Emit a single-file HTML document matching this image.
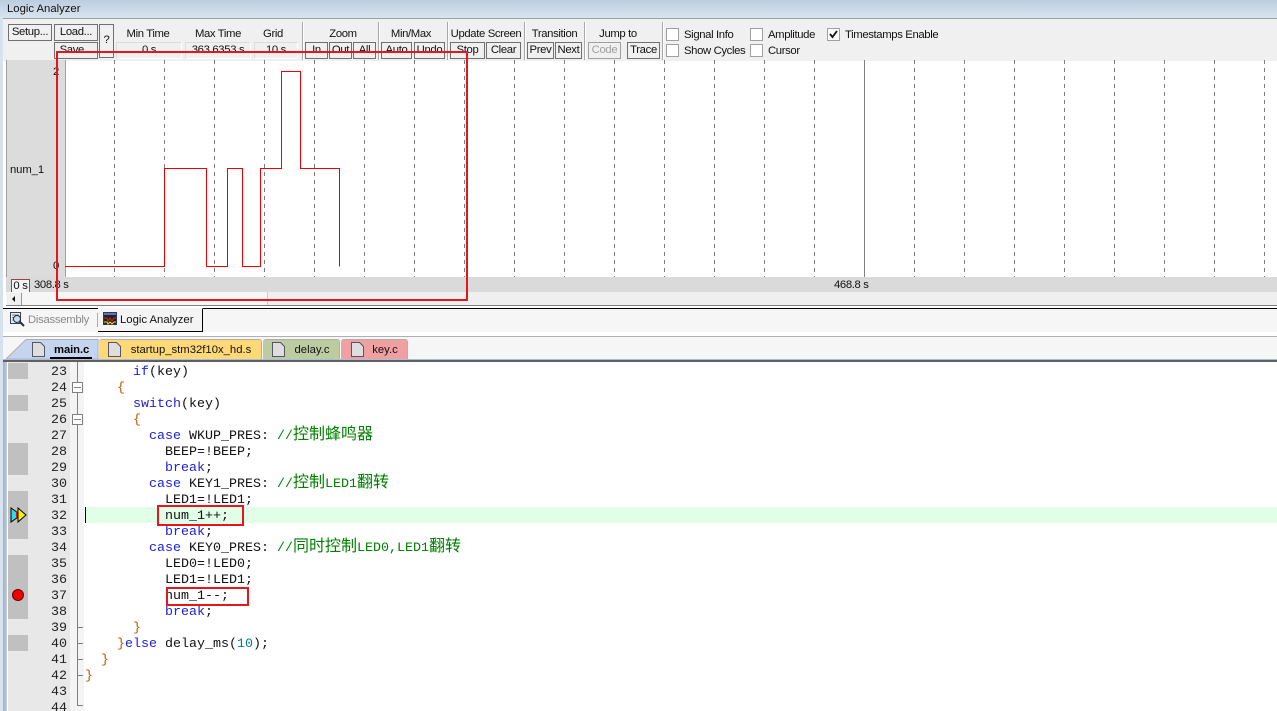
<!DOCTYPE html>
<html><head><meta charset="utf-8"><style>
html,body{margin:0;padding:0;background:#fff}
#p{position:relative;width:1277px;height:711px;overflow:hidden;background:#fff;font-family:"Liberation Sans","Noto Sans CJK SC",sans-serif;font-size:11.3px;color:#111}
#p div{position:absolute}
.t{white-space:pre;line-height:14px;letter-spacing:-.36px}
.c{text-align:center}
.b{box-sizing:border-box;border:1px solid #707070;background:#f0f0f0;text-align:center;line-height:15px;height:17px;white-space:pre;letter-spacing:-.33px}
.f{box-sizing:border-box;border:1px solid #dcdcdc;border-bottom:1px solid #fff;border-right:1px solid #fff;background:#f0f0f0;height:17px;top:42px;text-align:center;line-height:15px;letter-spacing:-.33px}
.s{width:1px;top:22px;height:38px;background:#a8a8a8;border-right:1px solid #fff}
.k{box-sizing:border-box;width:13px;height:13px;border:1px solid #a0a0a0;background:#fff}
.l{font-family:"Liberation Mono","Noto Sans CJK SC",monospace;font-size:13.33px;line-height:16px;white-space:pre;color:#111;left:85px}
.l b{font-weight:400;color:#2020e0}.l i{font-style:normal;color:#008000}.l u{text-decoration:none;color:#b85a00}.l s{text-decoration:none;color:#008080}
.l em{font-style:normal;font-size:16px;line-height:0;font-family:"Noto Sans CJK SC",sans-serif}
.n{font-family:"Liberation Mono",monospace;font-size:13.33px;line-height:16px;left:40px;width:27px;text-align:right;color:#222}
.g{left:8px;width:20px;background:#c0c0c0}
.r{border:2px solid #e8141e;box-sizing:border-box}
.tab{top:339px;height:20px;box-sizing:border-box;border-top:1px solid #b0b0b0;border-right:1px solid #b0b0b0;text-align:center;line-height:20px;border-radius:3px 3px 0 0}
</style></head><body><div id="p">
<div style="left:0;top:0;width:1277px;height:18px;background:linear-gradient(#bccde0,#d8e4f0)"></div>
<div class="t" style="left:7px;top:2px;letter-spacing:0">Logic Analyzer</div>
<div style="left:0;top:18px;width:3px;height:693px;background:#d6e2ee"></div>
<div style="left:3px;top:18px;width:1274px;height:42px;background:#f0f0f0;border-top:1px solid #a0a0a0"></div>

<div class="b" style="left:8px;top:24px;width:44px">Setup...</div>
<div class="b" style="left:54px;top:24px;width:44px">Load...</div>
<div class="b" style="left:54px;top:42px;width:44px">Save...</div>
<div class="b" style="left:99px;top:24px;width:15px;height:34px;line-height:30px">?</div>
<div class="t c" style="left:116px;top:27px;width:64px">Min Time</div>
<div class="t c" style="left:185px;top:27px;width:66px">Max Time</div>
<div class="t c" style="left:251px;top:27px;width:44px">Grid</div>
<div class="f" style="left:116px;width:66px">0 s</div>
<div class="f" style="left:185px;width:66px">363.6353 s</div>
<div class="f" style="left:254px;width:44px">10 s</div>
<div class="s" style="left:302px"></div>
<div class="t c" style="left:307px;top:27px;width:72px">Zoom</div>
<div class="b" style="left:305px;top:42px;width:23px">In</div>
<div class="b" style="left:329px;top:42px;width:23px">Out</div>
<div class="b" style="left:353px;top:42px;width:23px">All</div>
<div class="s" style="left:378px"></div>
<div class="t c" style="left:380px;top:27px;width:62px">Min/Max</div>
<div class="b" style="left:381px;top:42px;width:31px">Auto</div>
<div class="b" style="left:414px;top:42px;width:31px">Undo</div>
<div class="s" style="left:447px"></div>
<div class="t c" style="left:450px;top:27px;width:72px">Update Screen</div>
<div class="b" style="left:450px;top:42px;width:35px">Stop</div>
<div class="b" style="left:486px;top:42px;width:35px">Clear</div>
<div class="s" style="left:524px"></div>
<div class="t c" style="left:527px;top:27px;width:55px">Transition</div>
<div class="b" style="left:527px;top:42px;width:27px">Prev</div>
<div class="b" style="left:555px;top:42px;width:27px">Next</div>
<div class="s" style="left:584px"></div>
<div class="t c" style="left:588px;top:27px;width:60px">Jump to</div>
<div class="b" style="left:588px;top:42px;width:33px;color:#a0a0a0;border-color:#a0a0a0">Code</div>
<div class="b" style="left:627px;top:42px;width:33px">Trace</div>
<div class="s" style="left:662px"></div>
<div class="k" style="left:666px;top:28px"></div><div class="t" style="left:684px;top:28px">Signal Info</div>
<div class="k" style="left:666px;top:44px"></div><div class="t" style="left:684px;top:44px">Show Cycles</div>
<div class="k" style="left:750px;top:28px"></div><div class="t" style="left:768px;top:28px">Amplitude</div>
<div class="k" style="left:750px;top:44px"></div><div class="t" style="left:768px;top:44px">Cursor</div>
<div class="k" style="left:827px;top:28px"></div><div class="t" style="left:845px;top:28px">Timestamps Enable</div>
<svg style="position:absolute;left:827px;top:28px" width="13" height="13"><path d="M3 6l2.500 3L10 3" fill="none" stroke="#111" stroke-width="1.800"/></svg>

<div style="left:6px;top:60px;width:58px;height:217px;background:#dcdcdc;border-left:1px solid #a0a0a0;border-right:1px solid #a0a0a0"></div>
<div class="t" style="left:10px;top:163px;letter-spacing:-.1px">num_1</div>
<div class="t" style="left:53px;top:65px">2</div>
<div class="t" style="left:53px;top:259px">0</div>
<svg style="position:absolute;left:0;top:0" width="1277" height="300">
<path d="M114.500 60V277M164.500 60V277M214.500 60V277M264.500 60V277M314.500 60V277M364.500 60V277M414.500 60V277M464.500 60V277M514.500 60V277M564.500 60V277M614.500 60V277M664.500 60V277M714.500 60V277M764.500 60V277M814.500 60V277M914.500 60V277M964.500 60V277M1014.500 60V277M1064.500 60V277M1114.500 60V277M1164.500 60V277M1214.500 60V277M1264.500 60V277" stroke="#808080" stroke-dasharray="4 4" fill="none"/>
<path d="M864.500 60V277" stroke="#808080" fill="none"/>
<path d="M65 266.500H164.500V168.500H206.500V266.500H227.500V168.500H242.500V266.500H260.500V168.500H281.500V71.500H300.500V168.500H339.500V266.500" stroke="#f00000" fill="none"/>
</svg>
<div style="left:6px;top:277px;width:1271px;height:15px;background:#dadada"></div>
<div style="left:11px;top:279px;width:19px;height:14px;box-sizing:border-box;border:1px solid #a04040;border-bottom:0;background:#f4f4f4;line-height:13px;text-align:center;letter-spacing:-.3px">0 s</div>
<div class="t" style="left:34px;top:278px">308.8 s</div>
<div class="t" style="left:834px;top:278px">468.8 s</div>
<div style="left:6px;top:292px;width:261px;height:14px;background:#f6f6f6"></div>
<div style="left:267px;top:292px;width:1010px;height:13px;background:#efefef;border-left:1px solid #ccc"></div>
<div style="left:7px;top:293px;width:15px;height:13px;background:#f0f0f0;box-sizing:border-box;border-right:1px solid #999;border-bottom:1px solid #999"></div>
<svg style="position:absolute;left:10px;top:295px" width="8" height="8"><path d="M5 1L2 4L5 7Z" fill="#111"/></svg>
<div style="left:6px;top:305px;width:1271px;height:1px;background:#808080"></div>
<div style="left:3px;top:306px;width:1274px;height:1px;background:#fff"></div>
<div style="left:3px;top:308px;width:1274px;height:1px;background:#000"></div>
<div style="left:3px;top:309px;width:1274px;height:23px;background:#f6f6f6"></div>
<div style="left:98px;top:308px;width:105px;height:24px;box-sizing:border-box;background:#f4f4f4;border-right:1px solid #000;border-bottom:1px solid #000;border-top:1px solid #f4f4f4"></div>
<svg style="position:absolute;left:9px;top:311px" width="17" height="17"><rect x="1.500" y="1.500" width="10" height="11" fill="#eee" stroke="#345"/><path d="M3 4h7M3 6.500h7M3 9h7" stroke="#678"/><circle cx="8" cy="8" r="3.500" fill="#cde" stroke="#234"/><path d="M10.500 10.500L15 15" stroke="#234" stroke-width="2"/></svg>
<div class="t" style="left:28px;top:313px;color:#8a8a8a;letter-spacing:-.28px">Disassembly</div>
<div style="left:97px;top:313px;width:1px;height:14px;background:#b0b0b0"></div>
<svg style="position:absolute;left:103px;top:312px" width="14" height="14"><rect x=".5" y=".5" width="13" height="12" fill="#222" stroke="#336"/><rect x="1" y="1" width="12" height="2" fill="#5577bb"/><path d="M1 6h3l1 3 2-3 2 3 2-3h2" stroke="#e02020" fill="none"/><path d="M1 10h3l1 2 2-2 2 2 2-2h2" stroke="#f0e000" fill="none"/></svg>
<div class="t" style="left:120px;top:313px;letter-spacing:0">Logic Analyzer</div>

<div style="left:3px;top:336px;width:1274px;height:1px;background:#b0b0b0"></div>
<div style="left:3px;top:337px;width:1274px;height:22px;background:#f6f6f6"></div>
<svg style="position:absolute;left:6px;top:338px" width="94" height="22"><path d="M0 21L20 1.500H92V21Z" fill="#c5d5f0" stroke="#b0b0b0"/></svg>
<div class="t" style="left:54px;top:343px;font-weight:700;letter-spacing:-.1px;color:#000">main.c</div>
<div style="left:50px;top:357px;width:42px;height:2px;background:#000"></div>
<div class="tab" style="left:99px;width:163px;background:#ffd878;padding-left:22px">startup_stm32f10x_hd.s</div>
<div class="tab" style="left:263px;width:77px;background:#bccca0;padding-left:22px">delay.c</div>
<div class="tab" style="left:341px;width:67px;background:#f0a0a0;padding-left:22px">key.c</div>
<svg style="position:absolute;left:0;top:341px" width="420" height="18"><g fill="#dedede" stroke="#556"><path d="M32.500 1.500H40.500L44.500 5.500V15.500H32.500Z"/><path d="M108.500 1.500H116.500L120.500 5.500V15.500H108.500Z"/><path d="M272.500 1.500H280.500L284.500 5.500V15.500H272.500Z"/><path d="M351.500 1.500H359.500L363.500 5.500V15.500H351.500Z"/></g></svg>
<div style="left:3px;top:359px;width:1274px;height:1px;background:#a8bcdc"></div>
<div style="left:3px;top:360px;width:1274px;height:2px;background:#606060"></div>
<div style="left:3px;top:362px;width:4px;height:349px;background:linear-gradient(90deg,#9cb0cc,#c4ccd8)"></div>

<div style="left:8px;top:362px;width:62px;height:349px;background:#e8e8e8"></div>
<div style="left:70px;top:362px;width:14px;height:349px;background:#f4f4f4"></div>
<div class="g" style="top:363px;height:16px"></div>
<div class="g" style="top:395px;height:16px"></div>
<div class="g" style="top:443px;height:32px"></div>
<div class="g" style="top:491px;height:48px"></div>
<div class="g" style="top:555px;height:64px"></div>
<div class="g" style="top:635px;height:16px"></div>
<div style="left:77px;top:362px;width:1px;height:343px;background:#808080"></div>
<div style="left:77px;top:705px;width:6px;height:1px;background:#808080"></div>
<div style="left:77px;top:627px;width:6px;height:1px;background:#808080"></div>
<div style="left:77px;top:643px;width:6px;height:1px;background:#808080"></div>
<div style="left:77px;top:659px;width:6px;height:1px;background:#808080"></div>
<div style="left:77px;top:675px;width:6px;height:1px;background:#808080"></div>
<div style="left:72px;top:382px;width:11px;height:11px;box-sizing:border-box;border:1px solid #808080;background:#fff"></div>
<div style="left:74px;top:387px;width:7px;height:1px;background:#808080"></div>
<div style="left:72px;top:414px;width:11px;height:11px;box-sizing:border-box;border:1px solid #808080;background:#fff"></div>
<div style="left:74px;top:419px;width:7px;height:1px;background:#808080"></div>

<div style="left:85px;top:507px;width:1192px;height:16px;background:#e0ffe6"></div>
<div style="left:85px;top:507px;width:1px;height:16px;background:#000"></div>
<svg style="position:absolute;left:10px;top:507px" width="18" height="16"><path d="M1 1L11 8L1 15Z" fill="#20e0f0" stroke="#000"/><path d="M6 4.500L11 8L6 11.500Z" fill="#e01010"/><path d="M8 1L16 8L8 15Z" fill="#f8f000" stroke="#000"/></svg>
<svg style="position:absolute;left:11px;top:588px" width="14" height="14"><circle cx="7" cy="7" r="5.500" fill="#f00000" stroke="#600" /></svg>

<div class="n" style="top:365px">23</div><div class="n" style="top:381px">24</div><div class="n" style="top:397px">25</div><div class="n" style="top:413px">26</div><div class="n" style="top:429px">27</div><div class="n" style="top:445px">28</div><div class="n" style="top:461px">29</div><div class="n" style="top:477px">30</div><div class="n" style="top:493px">31</div><div class="n" style="top:509px">32</div><div class="n" style="top:525px">33</div><div class="n" style="top:541px">34</div><div class="n" style="top:557px">35</div><div class="n" style="top:573px">36</div><div class="n" style="top:589px">37</div><div class="n" style="top:605px">38</div><div class="n" style="top:621px">39</div><div class="n" style="top:637px">40</div><div class="n" style="top:653px">41</div><div class="n" style="top:669px">42</div><div class="n" style="top:685px">43</div><div class="n" style="top:701px">44</div>

<div class="l" style="top:365px">      <b>if</b>(key)</div>
<div class="l" style="top:381px">    <u>{</u></div>
<div class="l" style="top:397px">      <b>switch</b>(key)</div>
<div class="l" style="top:413px">      <u>{</u></div>
<div class="l" style="top:429px">        <b>case</b> WKUP_PRES: <i>//<em>控制蜂鸣器</em></i></div>
<div class="l" style="top:445px">          BEEP=!BEEP;</div>
<div class="l" style="top:461px">          <b>break</b>;</div>
<div class="l" style="top:477px">        <b>case</b> KEY1_PRES: <i>//<em>控制</em>LED1<em>翻转</em></i></div>
<div class="l" style="top:493px">          LED1=!LED1;</div>
<div class="l" style="top:509px">          num_1++;</div>
<div class="l" style="top:525px">          <b>break</b>;</div>
<div class="l" style="top:541px">        <b>case</b> KEY0_PRES: <i>//<em>同时控制</em>LED0,LED1<em>翻转</em></i></div>
<div class="l" style="top:557px">          LED0=!LED0;</div>
<div class="l" style="top:573px">          LED1=!LED1;</div>
<div class="l" style="top:589px">          num_1--;</div>
<div class="l" style="top:605px">          <b>break</b>;</div>
<div class="l" style="top:621px">      <u>}</u></div>
<div class="l" style="top:637px">    <u>}</u><b>else</b> delay_ms(<s>10</s>);</div>
<div class="l" style="top:653px">  <u>}</u></div>
<div class="l" style="top:669px"><u>}</u></div>

<div class="r" style="left:157px;top:505px;width:87px;height:21px"></div>
<div class="r" style="left:166px;top:587px;width:83px;height:19px"></div>
<div class="r" style="left:56px;top:51px;width:412px;height:250px"></div>
</div></body></html>
